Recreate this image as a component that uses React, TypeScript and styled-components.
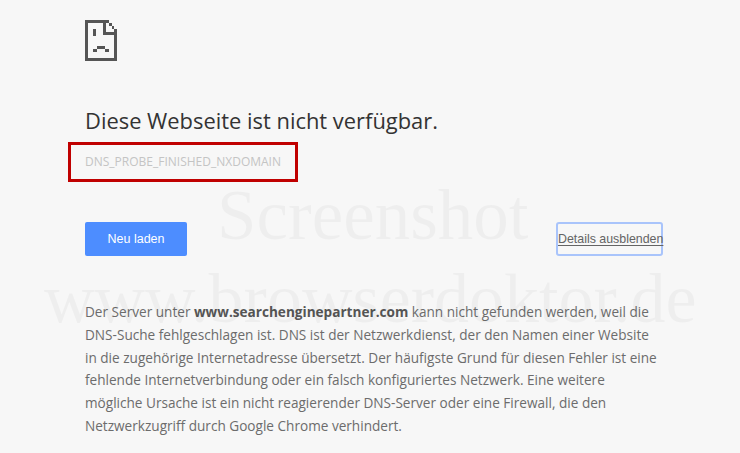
import React from "react";
import styled, { createGlobalStyle } from "styled-components";

const GlobalStyle = createGlobalStyle`
  html, body {
    margin: 0;
    padding: 0;
    background: #f7f7f7;
    overflow: hidden;
  }
`;

const Page = styled.div`
  position: relative;
  width: 740px;
  height: 453px;
  overflow: hidden;
  box-sizing: border-box;
  padding: 20px 77px 0 85px;
  background: #f7f7f7;
  font-family: "Open Sans", "Liberation Sans", sans-serif;
  color: #646464;
`;

const IconBox = styled.div`
  height: 41px;
  margin-bottom: 45px;
  svg {
    display: block;
  }
`;

const Title = styled.h1`
  margin: 0;
  font-size: 21.9px;
  line-height: 30px;
  font-weight: 400;
  color: #333;
  white-space: nowrap;
`;

const CodeFrame = styled.div`
  position: relative;
  height: 24px;
  margin-top: 13px;
  margin-bottom: 49px;
  display: flex;
  align-items: center;
  font-size: 12px;
  color: #c4c4c4;
  white-space: nowrap;
  &::after {
    content: "";
    position: absolute;
    left: -17px;
    top: -7px;
    width: 230px;
    height: 40px;
    border: 3px solid #c00000;
    box-sizing: border-box;
    pointer-events: none;
  }
`;

const Actions = styled.div`
  display: flex;
  justify-content: space-between;
  align-items: stretch;
  margin-bottom: 45px;
`;

const ReloadButton = styled.button`
  width: 102px;
  height: 34px;
  padding: 0;
  border: 0;
  border-radius: 2px;
  background: #4d8dff;
  color: #fff;
  font-family: "Liberation Sans", sans-serif;
  font-size: 12.5px;
`;

const DetailsButton = styled.button`
  width: 107px;
  height: 34px;
  padding: 0;
  border: 2px solid #a9c4fb;
  border-radius: 3px;
  background: transparent;
  color: #646464;
  font-family: "Liberation Sans", sans-serif;
  font-size: 12.4px;
  text-decoration: underline;
  white-space: nowrap;
  text-underline-offset: 2px;
`;

const Body = styled.p`
  margin: 0;
  width: 590px;
  font-size: 13.6px;
  line-height: 22.75px;
  color: #6c6c6c;
  white-space: nowrap;
  b {
    font-weight: 700;
    color: #555;
  }
`;

const Watermark = styled.div<{ $left: number; $top: number; $size: number }>`
  position: absolute;
  left: ${({ $left }) => $left}px;
  top: ${({ $top }) => $top}px;
  font-family: "Liberation Serif", serif;
  font-size: ${({ $size }) => $size}px;
  line-height: 1;
  color: rgba(0, 0, 0, 0.035);
  white-space: nowrap;
  pointer-events: none;
`;

function SadPage() {
  return (
    <svg width="32" height="41" viewBox="0 0 32 41" fill="#555" shapeRendering="crispEdges">
      <path d="M0 0h21v3H3v35h26V13h3v28H0z" />
      <path d="M21 0h3v3h-3zM24 3h2.500v3H24zM26.500 6H29v3h-2.500zM29 9h3v4h-3z" />
      <path d="M18 2h3v10h11v3H18z" />
      <rect x="8" y="9" width="3" height="7" />
      <rect x="12" y="26" width="8" height="3" />
      <rect x="8" y="29" width="4" height="3" />
      <rect x="20" y="29" width="4" height="3" />
    </svg>
  );
}

export default function App() {
  return (
    <>
      <GlobalStyle />
      <Page>
        <Watermark $left={217} $top={180} $size={71}>Screenshot</Watermark>
        <Watermark $left={44} $top={264} $size={70}>www.browserdoktor.de</Watermark>
        <IconBox>
          <SadPage />
        </IconBox>
        <Title>Diese Webseite ist nicht verfügbar.</Title>
        <CodeFrame>DNS_PROBE_FINISHED_NXDOMAIN</CodeFrame>
        <Actions>
          <ReloadButton>Neu laden</ReloadButton>
          <DetailsButton>Details ausblenden</DetailsButton>
        </Actions>
        <Body>
          Der Server unter <b>www.searchenginepartner.com</b> kann nicht gefunden werden, weil die
          <br />
          DNS-Suche fehlgeschlagen ist. DNS ist der Netzwerkdienst, der den Namen einer Website
          <br />
          in die zugehörige Internetadresse übersetzt. Der häufigste Grund für diesen Fehler ist eine
          <br />
          fehlende Internetverbindung oder ein falsch konfiguriertes Netzwerk. Eine weitere
          <br />
          mögliche Ursache ist ein nicht reagierender DNS-Server oder eine Firewall, die den
          <br />
          Netzwerkzugriff durch Google Chrome verhindert.
        </Body>
      </Page>
    </>
  );
}
